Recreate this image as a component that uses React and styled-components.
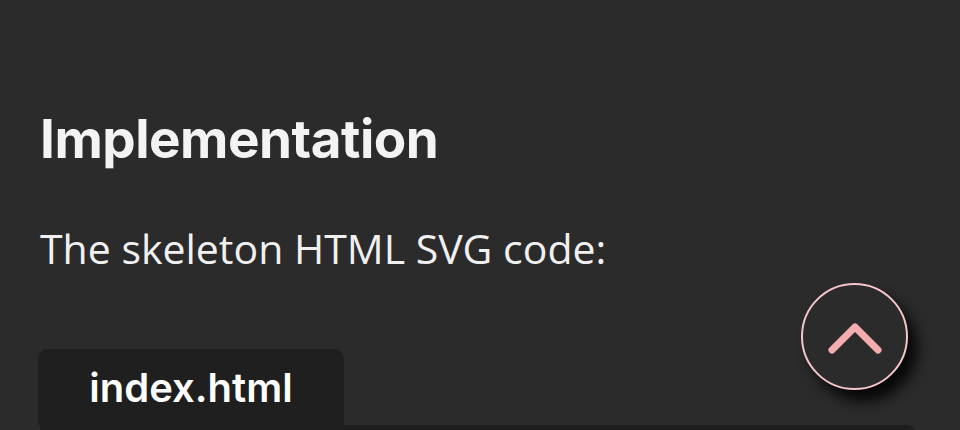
import React from "react";
import styled, { createGlobalStyle } from "styled-components";

const GlobalStyle = createGlobalStyle`
  html, body {
    margin: 0;
    padding: 0;
    background: #2b2b2b;
    overflow: hidden;
  }
`;

const Page = styled.main`
  padding: 104px 43px 0 40px;
  color: #f2f2f2;
`;

const Heading = styled.h2`
  margin: 0;
  font-family: Inter, "Liberation Sans", sans-serif;
  font-weight: 700;
  font-size: 53px;
  line-height: 70px;
  letter-spacing: -0.5px;
  color: #f3f3f3;
`;

const Text = styled.p`
  margin: 46px 0 0;
  font-family: "Open Sans", "Liberation Sans", sans-serif;
  font-size: 41px;
  line-height: 56px;
  color: #f0f0f0;
`;

const CodeBox = styled.section`
  margin-top: 73px;
  display: flex;
  flex-direction: column;
  align-items: flex-start;
`;

const Tab = styled.div`
  width: 306px;
  height: 76px;
  margin-left: -2px;
  display: flex;
  align-items: center;
  justify-content: center;
  background: #1f1f1f;
  border-radius: 10px 10px 0 0;
  font-family: Inter, "Liberation Sans", sans-serif;
  font-weight: 600;
  font-size: 40px;
  color: #ffffff;
`;

const Code = styled.pre`
  margin: 0;
  width: 100%;
  height: 200px;
  background: #1e1e1e;
  border-radius: 0 10px 10px 10px;
`;

const TopButton = styled.button`
  position: fixed;
  right: 52px;
  bottom: 40px;
  width: 107px;
  height: 107px;
  padding: 0;
  display: flex;
  align-items: center;
  justify-content: center;
  border: 2px solid #f4c6c8;
  border-radius: 50%;
  background: #2b2b2b;
  box-shadow: 9px 11px 14px rgba(0, 0, 0, 0.85);
  cursor: pointer;

  svg {
    margin-top: 7px;
  }
`;

const UpIcon = () => (
  <svg width="64" height="40" viewBox="0 0 64 40">
    <path
      d="M9 30 L32 7 L55 30"
      fill="none"
      stroke="#f5adb0"
      strokeWidth="7"
      strokeLinecap="round"
      strokeLinejoin="round"
    />
  </svg>
);

export default function App() {
  return (
    <>
      <GlobalStyle />
      <Page>
        <Heading>Implementation</Heading>
        <Text>The skeleton HTML SVG code:</Text>
        <CodeBox>
          <Tab>index.html</Tab>
          <Code />
        </CodeBox>
      </Page>
      <TopButton aria-label="Back to top">
        <UpIcon />
      </TopButton>
    </>
  );
}
